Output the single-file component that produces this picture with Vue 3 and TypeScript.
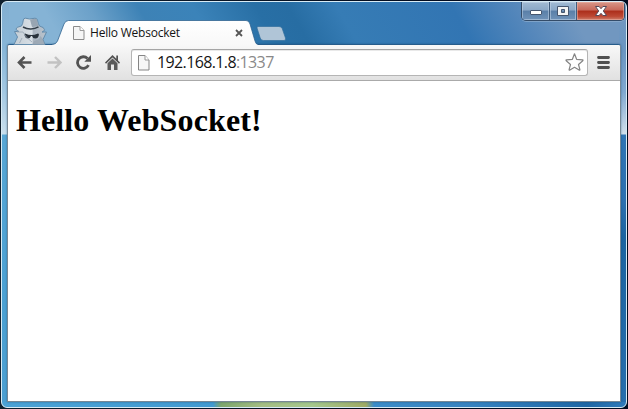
<script setup lang="ts">
import { ref } from 'vue'

const tabTitle = ref('Hello Websocket')
const host = ref('192.168.1.8')
const port = ref(':1337')
const heading = ref('Hello WebSocket!')
</script>

<template>
  <div class="desktop">
    <div class="window">
      <div class="controls">
        <button class="ctl min" aria-label="Minimize">
          <svg width="14" height="12" viewBox="0 0 14 12"><rect x="1.5" y="5.5" width="11" height="4" rx=".5" fill="#fff" stroke="#46566f" /></svg>
        </button>
        <button class="ctl max" aria-label="Maximize">
          <svg width="14" height="12" viewBox="0 0 14 12"><path d="M1.500 1.500h11v9h-11zM5.500 4.500v3h3v-3z" fill="#f4f4f4" fill-rule="evenodd" stroke="#46566f" /></svg>
        </button>
        <button class="ctl close" aria-label="Close">
          <svg width="14" height="12" viewBox="0 0 14 12"><path d="M1.500 1.500h3.600L7 3.700l1.900-2.200h3.600L9.300 6l3.200 4.500H8.900L7 8.300l-1.900 2.200H1.500L4.700 6z" fill="#fff" stroke="#564958" /></svg>
        </button>
      </div>

      <header class="tabs">
        <svg class="spy" width="36" height="28" viewBox="0 0 36 28">
          <defs>
            <linearGradient id="coat" x1="0" x2="1" y1="0" y2="0"><stop offset="0" stop-color="#c3cdd5" /><stop offset=".55" stop-color="#d8dfe5" /><stop offset=".6" stop-color="#abb5c0" /><stop offset="1" stop-color="#bac4ce" /></linearGradient>
          </defs>
          <path d="M9.500 9Q11 6.500 11.300 3 11.600 1.200 13.500 1.200l4 .8L23 1.200q2 0 2.500 2 .5 3.300 2 5.800 5 1.300 5 3.800 0 1.400-2.500 2.200h4.500l-3.500 7.500 2 5H2l3.500-7.500-3-5.500H7q-3-1-3-2.500 0-2 5.500-3z" fill="url(#coat)" stroke="#648cac" />
          <path d="M18 2.500 23 1.800q1.800 0 2 1.500.5 3.200 1.500 5.500L20 10z" fill="#98a5b2" />
          <path d="M11 10q4 2.200 8 2t7.500-2.200" fill="none" stroke="#333e48" stroke-width="1.500" />
          <path d="M13 16.500q3.500 1.500 6.500 1.500t6.500-1.500q1.200 0 .9 1.500-.7 3.500-3.600 3.500-2.500 0-3.300-2.500h-1q-1 2.500-3 2.500-2.700 0-3.500-3.500-.4-1.500.5-1.500z" fill="#29323b" />
          <path d="M5 15h6q2 5 9 10M10 21l-2.500 5" fill="none" stroke="#97a5b2" stroke-width=".8" />
          <path d="m20 28 2-4 5-2 1.500-3 3 4 1.500 5z" fill="#919eac" opacity=".6" />
        </svg>
        <div class="tab">
          <svg class="tab-shape" width="206" height="26" viewBox="0 0 206 26">
            <defs><linearGradient id="tabfill" x1="0" x2="0" y1="0" y2="1"><stop offset="0" stop-color="#fff" /><stop offset="1" stop-color="#f8f8f8" /></linearGradient></defs>
            <path d="M0 24.500q4 0 5.500-3.500L12 4Q13.500.5 16.500.5H194q3 0 4 3.500l5 17q1 3.500 3 3.500V26H0z" fill="url(#tabfill)" />
            <path d="M0 24.500q4 0 5.500-3.500L12 4Q13.500.5 16.500.5H194q3 0 4 3.500l5 17q1 3.500 3 3.500" fill="none" stroke="#2b5f8c" stroke-opacity=".75" />
          </svg>
          <svg class="doc" width="12" height="14" viewBox="0 0 12 14"><path d="M.5.5h6.500l4 4v9H.5z" fill="#f5f5f5" stroke="#8b8b8b" /><path d="M7 .5v4h4" fill="#fff" stroke="#9b9b9b" /></svg>
          <span class="title">{{ tabTitle }}</span>
          <svg class="x" width="8" height="8" viewBox="0 0 8 8"><path d="m1 1 6 6M7 1 1 7" stroke="#565656" stroke-width="1.800" /></svg>
        </div>
        <svg class="newtab" width="33" height="17" viewBox="0 0 33 17"><path d="M3 1.500h21q2.500 0 3.200 2l3.300 9.500q.7 2.500-1.500 2.500H8.500q-2.500 0-3.300-2.500L2 3Q1.600 1.500 3 1.500z" fill="#b0c5d7" stroke="#316d9d" stroke-opacity=".7" /></svg>
      </header>

      <main class="content">
        <nav class="toolbar">
          <svg class="back" width="16" height="14" viewBox="0 0 16 14"><path d="M15.500 7.500H3M8.500 2 3 7.500l5.500 5.500" fill="none" stroke="#535353" stroke-width="2.600" /></svg>
          <svg class="forward" width="16" height="14" viewBox="0 0 16 14"><path d="M1.500 7.500h12.500M9 2l5.500 5.500L9 13" fill="none" stroke="#c2c2c2" stroke-width="2.400" /></svg>
          <svg class="reload" width="16" height="16" viewBox="0 0 16 16"><path d="M13.500 11.200A5.800 5.800 0 1 1 12.500 4.500" fill="none" stroke="#535353" stroke-width="2.800" /><path d="M16 1v6.700H9.300z" fill="#535353" /></svg>
          <svg class="home" width="16" height="16" viewBox="0 0 16 16"><path d="M8.500 1 1 8.500l1 1.200 6.500-6.200L15 9.700l1-1.200-2-2V1.500h-1.700v3.200z" fill="#535353" /><path d="M8.500 4.500 3.500 9.300V16H7v-5.500h3V16h3.500V9.300z" fill="#5b5b5b" /></svg>
          <div class="omnibox">
            <svg class="page-icon" width="12" height="16" viewBox="0 0 12 16"><path d="M.5.5H7l4 4.500v10H.5z" fill="#f6f6f6" stroke="#858585" /><path d="M7 .5V5h4" fill="#fff" stroke="#969696" /></svg>
            <span class="url">{{ host }}<span class="port">{{ port }}</span></span>
            <svg class="star" width="19" height="18" viewBox="0 0 19 18"><path d="m9.500.8 2.100 5.500 6 .5q.8.300.2.900L13.500 11.500l1.400 5.100q0 .8-.8.500L9.500 14.300 4.900 17.100q-.8.300-.8-.5l1.400-5.100L1.200 7.700q-.6-.6.200-.9l6-.5z" fill="#fff" stroke="#858585" stroke-width="1.200" stroke-linejoin="round" /></svg>
          </div>
          <svg class="menu" width="13" height="13" viewBox="0 0 13 13"><path d="M1.500 1.500h10M1.500 6.500h10M1.500 11.500h10" stroke="#505050" stroke-width="2.800" stroke-linecap="round" /></svg>
        </nav>
        <h1>{{ heading }}</h1>
      </main>
    </div>
  </div>
</template>

<style>
body { margin: 0; }
</style>

<style scoped>
.desktop {
  box-sizing: border-box;
  width: 628px;
  height: 409px;
  padding: 1px;
  background: linear-gradient(90deg, #10202e, #020b1f 70%);
}
svg { display: block; flex: none; }
.window {
  box-sizing: border-box;
  position: relative;
  height: 407px;
  padding: 0 5px 5px;
  border: 1px solid #d8ebf5;
  border-radius: 6px;
  overflow: hidden;
  background:
    linear-gradient(90deg, #4ba2d5 0, #429ad1 211px, #7da66c 219px, #a4bd83 260px, #a5c78c 310px, #9eaa65 364px, #3c8cc8 372px, #3782bf 470px, #1e67a5 585px, #307bbb) 0 400px / 100% 5px no-repeat,
    linear-gradient(180deg, #83afd1 0, #87b6d8 45px, #a4c9e3 90px, #c9dfed 132px, #58a7d5 133px, #4ba1d3 300px, #4c9fd1) 0 0 / 7px 100% no-repeat,
    linear-gradient(180deg, #7397bf 0, #6b96c2 50px, #81a9d0 90px, #d1deeb 132px, #3174b4 133px, #2c70b0 200px, #1c64a1 235px, #286fae) 100% 0 / 7px 100% no-repeat,
    linear-gradient(60deg, #85b3d5 0, #85b3d5 235px, #6ca1c9 275px, #3d82b6 318px, #3b83b9 365px, #286fa5 420px, #276da3 448px, #367cb5 490px, #3275b3 590px, #5587bb 645px, #7197c0 690px);
}
.controls {
  position: absolute;
  z-index: 2;
  top: -1px;
  right: 1px;
  display: flex;
  box-sizing: border-box;
  width: 104px;
  height: 20px;
  border: 1px solid #344c69;
  border-top-color: #cbd8e6;
  border-radius: 0 0 5px 5px;
  overflow: hidden;
  box-shadow: 0 1px 0 #a2bcd680;
}
.ctl {
  display: flex;
  align-items: center;
  justify-content: center;
  box-sizing: border-box;
  margin: 0;
  padding: 0 0 1px;
  border: 0;
  border-right: 1px solid #405c7d;
  box-shadow: inset 0 0 0 1px #c4d6e888;
  background: linear-gradient(#a1bad3 0, #8ba8c7 45%, #5a7fa8 50%, #7093b9);
}
.min { width: 28px; }
.max { width: 27px; }
.close {
  width: 47px;
  border-right: 0;
  box-shadow: inset 0 0 0 1px #edb5aa88;
  background: linear-gradient(#d89789 0, #c7685a 45%, #ac2e1b 50%, #bd4934 80%, #cd806e);
}
.tabs {
  display: flex;
  align-items: flex-end;
  height: 43px;
  padding-left: 5px;
}
.spy { margin-right: 4px; }
.tab {
  position: relative;
  display: flex;
  box-sizing: border-box;
  width: 206px;
  height: 25px;
  margin-bottom: -1px;
  padding: 6px 15px 0 21px;
  z-index: 1;
}
.tab-shape { position: absolute; top: -1px; left: 0; }
.doc, .title, .x { position: relative; }
.doc { margin-top: -1px; }
.title {
  flex: 1;
  margin: -1px 0 0 5px;
  font: 12px/14px "Open Sans", "Noto Sans", sans-serif;
  letter-spacing: -.22px;
  color: #141414;
  white-space: nowrap;
}
.x { margin-top: 2px; }
.newtab { margin: 0 0 3px -3px; }
.content {
  box-sizing: border-box;
  height: 358px;
  border: 1px solid #778895;
  border-top-color: #265c8b;
  border-radius: 3px 3px 0 0;
  background: #fff;
  overflow: hidden;
  margin-top: -1px;
  box-shadow: 0 0 2px #12406b99;
}
.toolbar {
  display: flex;
  align-items: center;
  box-sizing: border-box;
  height: 36px;
  padding: 0 0 1px 8px;
  border-bottom: 1px solid #aaa;
  background: linear-gradient(#f8f8f8, #e1e1e1);
}
.forward { margin-left: 14px; }
.reload { margin-left: 13px; }
.home { margin-left: 13px; }
.omnibox {
  display: flex;
  align-items: center;
  box-sizing: border-box;
  width: 457px;
  height: 27px;
  margin-left: 11px;
  padding: 0 3px 0 6px;
  border: 1px solid #b5b5b5;
  border-top-color: #a5a5a5;
  border-radius: 3px;
  background: #fff;
  box-shadow: inset 0 1px 0 #e9e9e9;
}
.page-icon { margin-top: 1px; }
.url {
  flex: 1;
  margin-left: 7px;
  font: 16px/20px "Open Sans", "Noto Sans", sans-serif;
  letter-spacing: -.62px;
  color: #151515;
}
.port { color: #898989; }
.menu { margin-left: 9px; }
h1 {
  margin: 21px 8px;
  font: bold 32px/37px "Liberation Serif", serif;
  letter-spacing: .12px;
  color: #000;
}
</style>
